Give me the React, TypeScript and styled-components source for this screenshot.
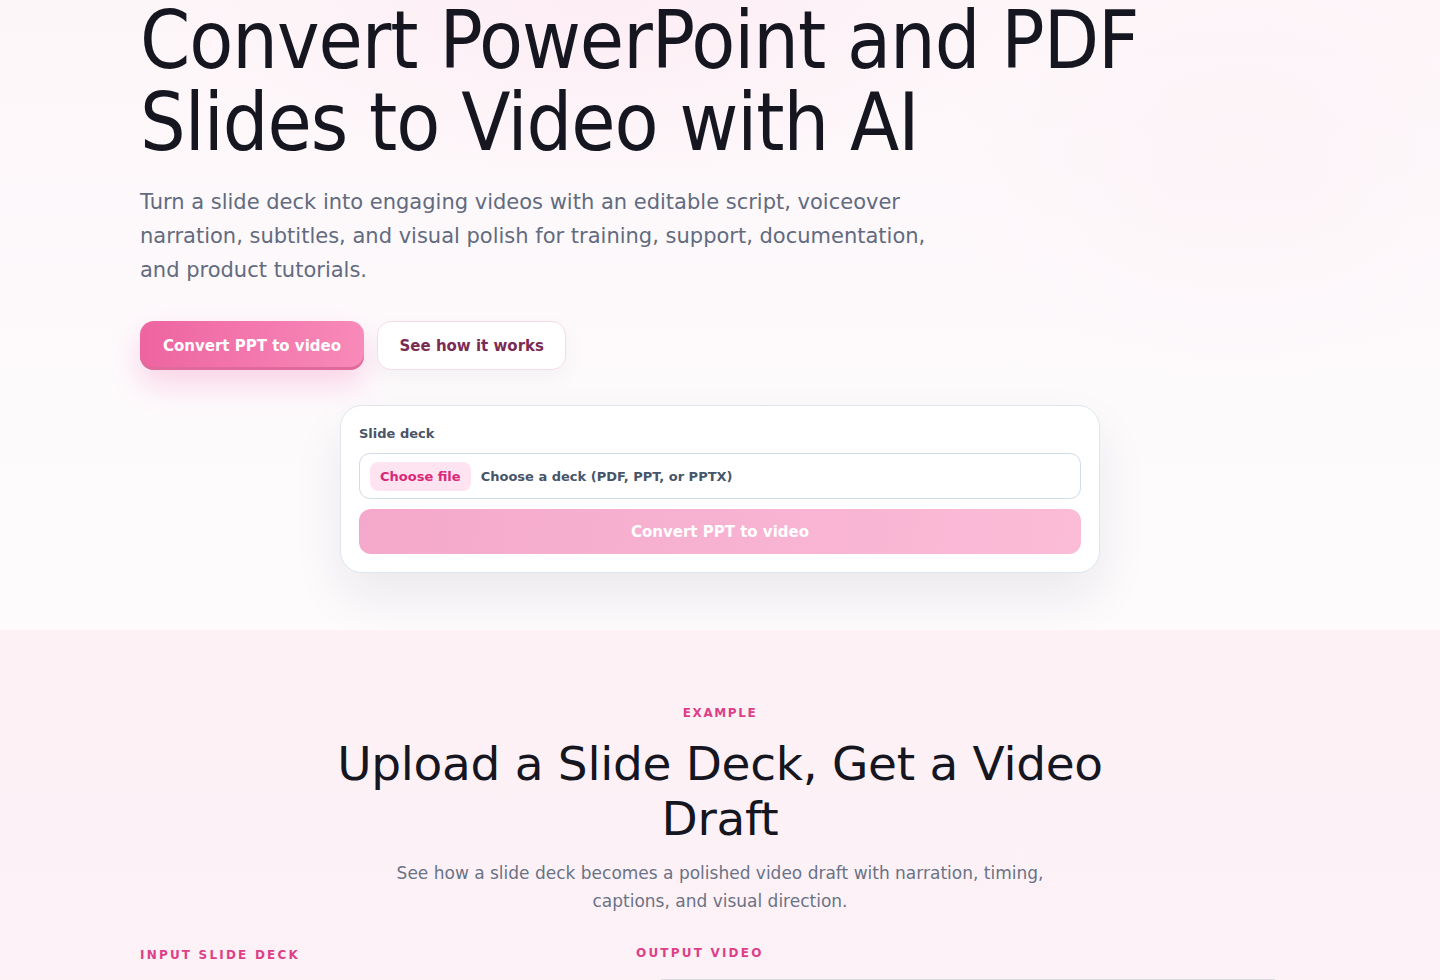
import React from 'react';
import styled, {createGlobalStyle} from 'styled-components';

const GlobalStyle = createGlobalStyle`
    html, body {
        margin: 0;
        padding: 0;
        background: #ffffff;
        font-family: "DejaVu Sans", "Noto Sans", sans-serif;
        color: #15161f;
    }
    * {
        box-sizing: border-box;
    }
`;

const Hero = styled.section`
    background:
        radial-gradient(ellipse 620px 260px at 600px 0px, rgba(252, 228, 239, 0.5), transparent 70%),
        radial-gradient(ellipse 420px 320px at 1240px 160px, rgba(251, 236, 243, 0.35), transparent 70%),
        linear-gradient(180deg, #fdf6f9 0%, #fdfafc 60%, #fdfbfc 100%);
    padding: 0 0 57px;
`;

const Container = styled.div`
    width: 1160px;
    margin: 0 auto;
`;

const Title = styled.h1`
    margin: 0;
    max-width: 1120px;
    font-family: "DejaVu Sans Condensed", "DejaVu Sans", sans-serif;
    font-stretch: condensed;
    font-size: 80px;
    line-height: 82px;
    font-weight: 400;
    letter-spacing: -1px;
    color: #15161f;
`;

const Lead = styled.p`
    margin: 21px 0 0;
    max-width: 820px;
    font-size: 21px;
    line-height: 34px;
    color: #626b7f;
`;

const Actions = styled.div`
    display: flex;
    gap: 13px;
    margin-top: 34px;
`;

const PrimaryButton = styled.button`
    height: 49px;
    padding: 0 23px;
    border: none;
    border-radius: 14px;
    background: linear-gradient(90deg, #ee64a0 0%, #f88ab9 100%);
    box-shadow: inset 0 -3px 0 #e06a9c, 0 14px 30px rgba(236, 72, 153, 0.22);
    color: #ffffff;
    font-family: inherit;
    font-size: 15px;
    font-weight: 700;
    cursor: pointer;
`;

const GhostButton = styled.button`
    height: 49px;
    padding: 0 21.5px;
    border: 1px solid #f8dbe8;
    border-radius: 14px;
    background: #ffffff;
    box-shadow: 0 8px 22px rgba(30, 20, 40, 0.04);
    color: #7a2c55;
    font-family: inherit;
    font-size: 15px;
    font-weight: 700;
    cursor: pointer;
`;

const UploadCard = styled.form`
    width: 760px;
    margin: 35px auto 0;
    padding: 18px;
    background: #ffffff;
    border: 1px solid #dfe6ee;
    border-radius: 22px;
    box-shadow: 0 24px 50px rgba(30, 20, 50, 0.08);
    display: flex;
    flex-direction: column;
`;

const FieldLabel = styled.label`
    font-size: 13px;
    line-height: 20px;
    font-weight: 700;
    color: #4a5568;
    margin: 0 0 9px;
`;

const FileField = styled.div`
    height: 46px;
    border: 1px solid #cfdce6;
    border-radius: 11px;
    display: flex;
    align-items: center;
    gap: 10px;
    padding: 0 10px;
`;

const FilePill = styled.span`
    height: 29px;
    padding: 0 10px;
    display: flex;
    align-items: center;
    border-radius: 8px;
    background: #fde4f0;
    color: #db2777;
    font-size: 13px;
    font-weight: 700;
`;

const FileHint = styled.span`
    font-size: 13px;
    font-weight: 700;
    color: #475569;
`;

const SubmitButton = styled.button`
    margin-top: 10px;
    height: 45px;
    border: none;
    border-radius: 12px;
    background: linear-gradient(100deg, #f4a8cb 0%, #fbbcd7 100%);
    color: #ffffff;
    font-family: inherit;
    font-size: 15px;
    font-weight: 700;
`;

const ExampleSection = styled.section`
    background: linear-gradient(180deg, #fdf1f6 0%, #fcf2f6 100%);
    padding: 73px 0 80px;
`;

const Eyebrow = styled.div<{align?: string; spacing?: number}>`
    font-size: 12px;
    line-height: 20px;
    font-weight: 700;
    letter-spacing: ${p => p.spacing || 2.2}px;
    color: #dd3f88;
    text-transform: uppercase;
    text-align: ${p => p.align || 'left'};
`;

const SectionTitle = styled.h2`
    margin: 13px auto 0;
    max-width: 800px;
    text-align: center;
    font-size: 47px;
    line-height: 55px;
    font-weight: 400;
    letter-spacing: -0.3px;
    color: #15161f;
`;

const SectionLead = styled.p`
    margin: 13px auto 0;
    max-width: 660px;
    text-align: center;
    font-size: 17px;
    line-height: 28px;
    color: #697386;
`;

const Compare = styled.div`
    display: grid;
    grid-template-columns: 460px 1fr;
    gap: 36px;
    margin-top: 28px;
`;

const Column = styled.div<{offset?: number}>`
    display: flex;
    flex-direction: column;
    padding-top: ${p => p.offset || 0}px;
`;

const SlidePreview = styled.div`
    margin-top: 30px;
    height: 300px;
    border-radius: 16px;
    background: #ffffff;
    border: 1px solid #e4e4ea;
`;

const VideoFrame = styled.div`
    margin: 16px 21px 0;
    height: 340px;
    border-radius: 6px 6px 0 0;
    background: #ffffff;
    border: 1px solid #d8d8de;
`;

export default function App() {
    return (
        <>
            <GlobalStyle/>
            <Hero>
                <Container>
                    <Title>Convert PowerPoint and PDF Slides to Video with AI</Title>
                    <Lead>
                        Turn a slide deck into engaging videos with an editable script, voiceover narration,
                        subtitles, and visual polish for training, support, documentation, and product tutorials.
                    </Lead>
                    <Actions>
                        <PrimaryButton type="button">Convert PPT to video</PrimaryButton>
                        <GhostButton type="button">See how it works</GhostButton>
                    </Actions>
                </Container>
                <UploadCard onSubmit={e => e.preventDefault()}>
                    <FieldLabel>Slide deck</FieldLabel>
                    <FileField>
                        <FilePill>Choose file</FilePill>
                        <FileHint>Choose a deck (PDF, PPT, or PPTX)</FileHint>
                    </FileField>
                    <SubmitButton type="submit" disabled>Convert PPT to video</SubmitButton>
                </UploadCard>
            </Hero>
            <ExampleSection>
                <Container>
                    <Eyebrow align="center" spacing={1.6}>Example</Eyebrow>
                    <SectionTitle>Upload a Slide Deck, Get a Video Draft</SectionTitle>
                    <SectionLead>
                        See how a slide deck becomes a polished video draft with narration, timing, captions, and
                        visual direction.
                    </SectionLead>
                    <Compare>
                        <Column offset={2}>
                            <Eyebrow>Input slide deck</Eyebrow>
                            <SlidePreview/>
                        </Column>
                        <Column>
                            <Eyebrow>Output video</Eyebrow>
                            <VideoFrame/>
                        </Column>
                    </Compare>
                </Container>
            </ExampleSection>
        </>
    );
}
